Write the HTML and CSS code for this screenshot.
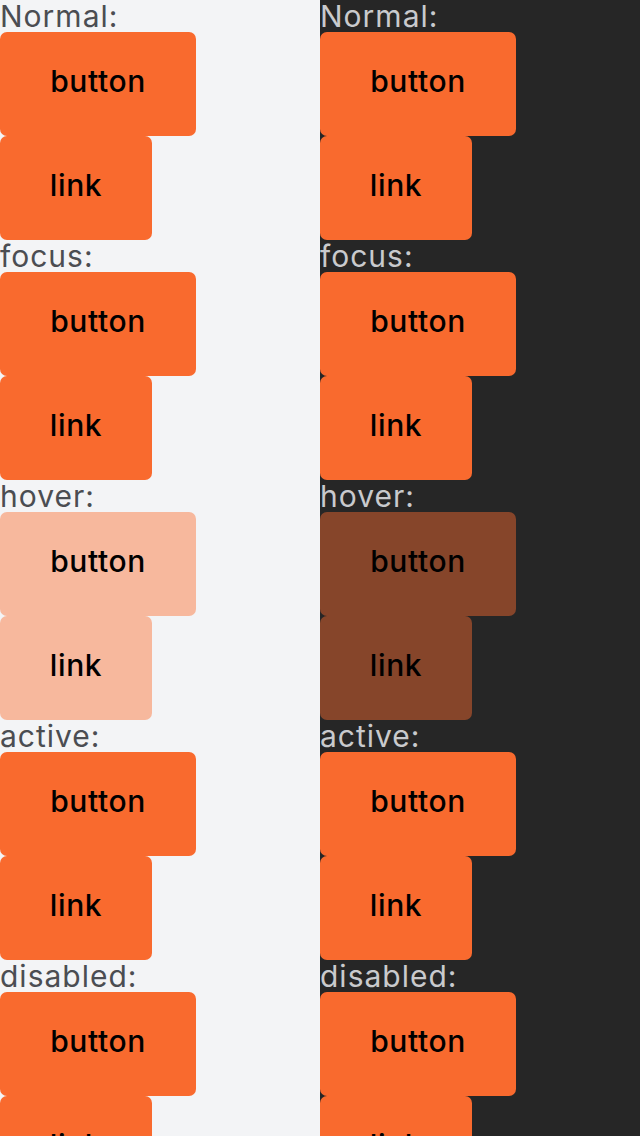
FILE: index.html
```html
<!DOCTYPE html>
<html>
<head>
<meta charset="utf-8">
<link rel="stylesheet" href="styles.css">
</head>
<body>
<div class="page">
  <div class="col light">
    <div class="label">Normal:</div>
    <div class="item"><button class="btn">button</button></div>
    <div class="item"><a class="btn link">link</a></div>
    <div class="label">focus:</div>
    <div class="item"><button class="btn">button</button></div>
    <div class="item"><a class="btn link">link</a></div>
    <div class="label">hover:</div>
    <div class="item"><button class="btn hover">button</button></div>
    <div class="item"><a class="btn link hover">link</a></div>
    <div class="label">active:</div>
    <div class="item"><button class="btn">button</button></div>
    <div class="item"><a class="btn link">link</a></div>
    <div class="label">disabled:</div>
    <div class="item"><button class="btn">button</button></div>
    <div class="item"><a class="btn link">link</a></div>
  </div>
  <div class="col dark">
    <div class="label">Normal:</div>
    <div class="item"><button class="btn">button</button></div>
    <div class="item"><a class="btn link">link</a></div>
    <div class="label">focus:</div>
    <div class="item"><button class="btn">button</button></div>
    <div class="item"><a class="btn link">link</a></div>
    <div class="label">hover:</div>
    <div class="item"><button class="btn hover">button</button></div>
    <div class="item"><a class="btn link hover">link</a></div>
    <div class="label">active:</div>
    <div class="item"><button class="btn">button</button></div>
    <div class="item"><a class="btn link">link</a></div>
    <div class="label">disabled:</div>
    <div class="item"><button class="btn">button</button></div>
    <div class="item"><a class="btn link">link</a></div>
  </div>
</div>
</body>
</html>
```
FILE: styles.css
```css
html, body {
  margin: 0;
  padding: 0;
  height: 100%;
  overflow: hidden;
}
body {
  font-family: Inter, "Liberation Sans", Arial, sans-serif;
}
.page {
  display: flex;
  width: 640px;
  height: 1136px;
}
.col {
  width: 320px;
  display: flex;
  flex-direction: column;
  align-items: flex-start;
}
.light {
  background: #f3f4f6;
}
.dark {
  background: #262626;
}
.label {
  height: 32px;
  font-size: 30px;
  line-height: 32px;
  letter-spacing: 1px;
}
.light .label {
  color: #4b4d52;
}
.dark .label {
  color: #c9cacd;
}
.item {
  display: flex;
}
.btn {
  box-sizing: border-box;
  display: flex;
  align-items: center;
  justify-content: center;
  width: 196px;
  height: 104px;
  padding: 0 0 6px;
  border: none;
  border-radius: 7px;
  background: #f96a2e;
  color: #000;
  font-family: Inter, "Liberation Sans", Arial, sans-serif;
  font-size: 30px;
  font-weight: 500;
  letter-spacing: 0.6px;
  text-decoration: none;
}
.link {
  width: 152px;
}
.light .hover {
  background: #f7b89d;
}
.dark .hover {
  background: #86452a;
}
```
